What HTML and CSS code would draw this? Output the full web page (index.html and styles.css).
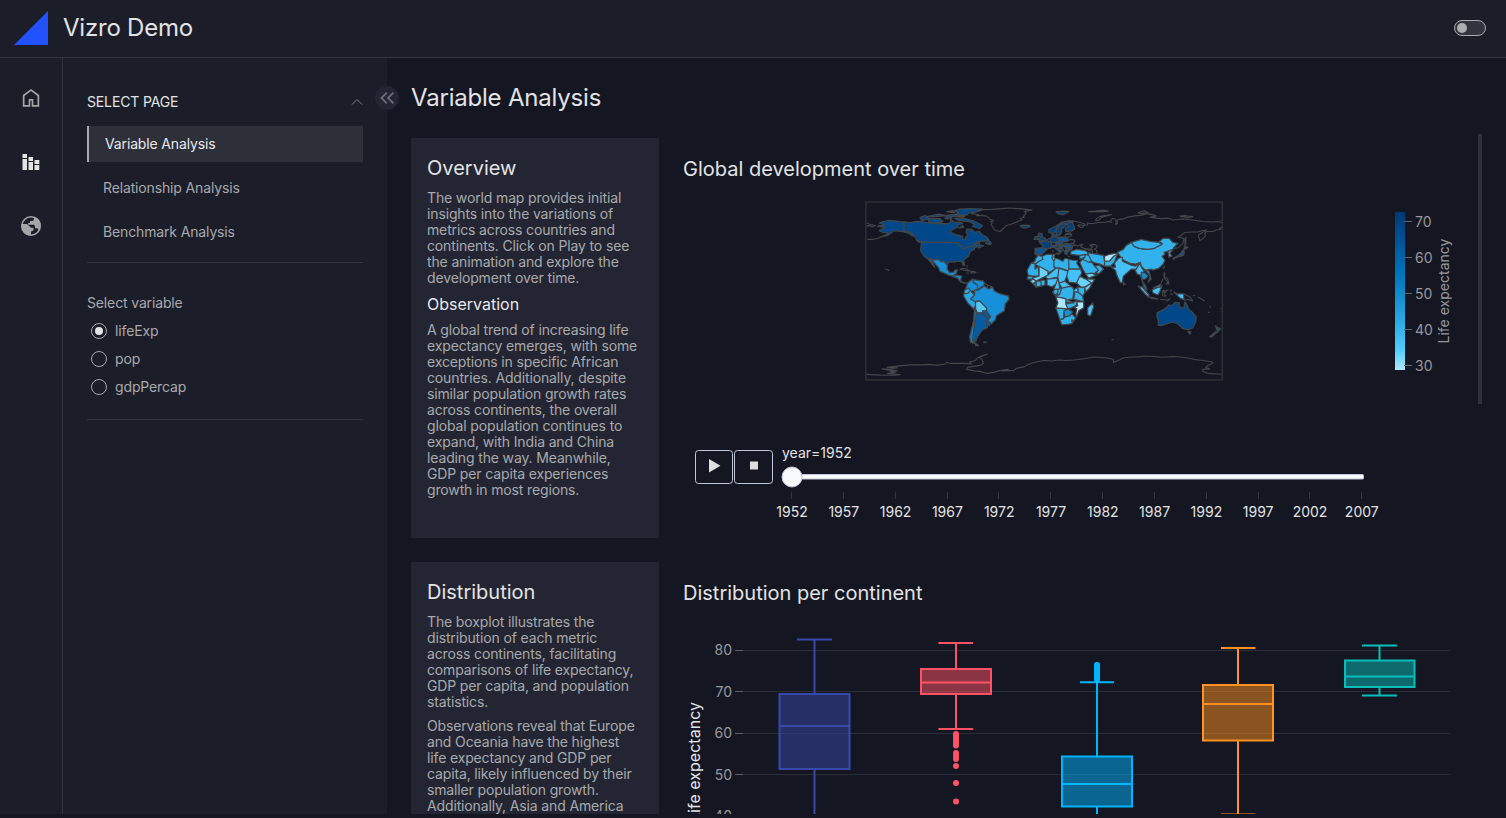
FILE: index.html
```html
<!DOCTYPE html>
<html lang="en">
<head>
<meta charset="utf-8">
<title>Vizro Demo</title>
<link rel="stylesheet" href="styles.css">
</head>
<body>
<div class="app">
  <header class="header">
    <svg class="logo" width="34" height="34" viewBox="0 0 34 34"><path d="M0 34 34 0V34Z" fill="#2251ff"/></svg>
    <h1 class="brand">Vizro Demo</h1>
    <span class="toggle"><span class="knob"></span></span>
  </header>
  <div class="body">
    <nav class="rail">
      <svg width="24" height="24" viewBox="0 0 24 24" fill="#a4a5a9"><path d="M5.500 19.100h4.200v-6h4.600v6h4.200V9.900L12 5.100 5.500 9.900Zm-1.700 1.700V9L12 3l8.200 6v11.800h-7.500v-6h-1.400v6Z"/></svg>
      <svg width="24" height="24" viewBox="0 0 24 24" fill="#e3e3e5"><path d="M3.500 9h4.500v11H3.500zM3.500 4h4.500v4H3.500zM9.500 12h4.500v8H9.500zM9.500 7h4.500v4H9.500zM15.500 15h4.800v5h-4.800zM15.500 10h4.800v4h-4.800z"/></svg>
      <svg width="24" height="24" viewBox="0 0 24 24" fill="#a4a5a9"><circle cx="12" cy="12" r="9.200" fill="none" stroke="#a4a5a9" stroke-width="1.600"/><path d="M2.500 10H8l4 3.800h2.500v2.700l-2.500 1V21.500C6.500 22 2 17.500 2.500 10ZM15 2.800V5a2 2 0 0 1-2 2h-2v2H9.200v1.800H15l1 1.200v2.200h2.200l1.800 2C24 10 20.500 4 15 2.800Z"/></svg>
    </nav>
    <aside class="panel">
      <div class="acc-title"><span>SELECT PAGE</span><svg width="12" height="8" viewBox="0 0 12 8"><path d="M1 6.500 6 1.500 11 6.500" fill="none" stroke="#7b7c83"/></svg></div>
      <div class="pages">
        <a class="page active">Variable Analysis</a>
        <a class="page">Relationship Analysis</a>
        <a class="page">Benchmark Analysis</a>
      </div>
      <div class="controls">
        <div class="label">Select variable</div>
        <div class="option"><span class="radio on"></span>lifeExp</div>
        <div class="option"><span class="radio"></span>pop</div>
        <div class="option"><span class="radio"></span>gdpPercap</div>
      </div>
      <span class="collapse"><svg width="24" height="24" viewBox="0 0 24 24"><path d="M11.800 6.600 6.400 12l5.400 5.400M18.400 6.600 13 12l5.400 5.400" fill="none" stroke="#6b6c75" stroke-width="1.800"/></svg></span>
    </aside>
    <main class="main">
      <h2 class="title">Variable Analysis</h2>
      <div class="grid">
        <section class="card">
          <h3>Overview</h3>
          <p>The world map provides initial<br>insights into the variations of<br>metrics across countries and<br>continents. Click on Play to see<br>the animation and explore the<br>development over time.</p>
          <h4>Observation</h4>
          <p>A global trend of increasing life<br>expectancy emerges, with some<br>exceptions in specific African<br>countries. Additionally, despite<br>similar population growth rates<br>across continents, the overall<br>global population continues to<br>expand, with India and China<br>leading the way. Meanwhile,<br>GDP per capita experiences<br>growth in most regions.</p>
        </section>
        <section class="figure">
          <h3>Global development over time</h3>
          <svg class="chart" width="775" height="340" viewBox="683 190 775 340">
            <defs>
              <linearGradient id="scale" x1="0" y1="0" x2="0" y2="1"><stop offset="0" stop-color="#003875"/><stop offset=".12" stop-color="#004a8c"/><stop offset=".4" stop-color="#0075bd"/><stop offset=".7" stop-color="#2caae6"/><stop offset=".88" stop-color="#52cfff"/><stop offset="1" stop-color="#afe7f9"/></linearGradient>
              <clipPath id="frame"><path d="M866 202h356v178H866z"/></clipPath>
            </defs>
            <g clip-path="url(#frame)"><g class="land" transform="translate(1044 291) scale(.992 -.992)">
              <g class="none">
                <path d="M-180 69-175 67-170 66-173 64.500-176 66-180 65M-164 54.500-168 53-173 52-178 52M-156 20.500-158 21.500-160 22.200"/>
                <path d="M-73 78-70 79.500-66 80.500-62 82-54 82.200-50 82.500-42 83-35 83.600-25 83-20 82.500-12 81.600-18 80.500-20 80-18 78.500-19 77-21 75.500-20 74-24 73-22 71.500-25 70.500-30 68.500-34 67-38 66-40 64-42 62-44 60-49 61-51 63-52 65-53.500 67-52 69-54 70-51 71-54 72-56 74-58 75.500-63 76.200-68 76-66 77.200-73 78Z"/>
                <path d="M28 71 32 70 37 69 41 67.500 40 66 35 66.800 34 66 37 64 40 64.500 39 66 44 66.500 43.500 68.500 46 68 50 68 54 69 60 69 65 70 68 69 67 71 69 73 72 72.500 73 70 72 67 74 68 74 71.500 77 72.500 80 72.500 83 74 87 75 93 76 98 76.500 104 78 111 76.500 113 75.500 107 74.500 113 73.500 119 73 125 73.500 130 71.500 140 72.500 150 71.500 160 70 170 69.500 175 70 180 69M180 65 177 63 179 62.500 174 61.500 170 60 165 60 163 59.500 162 57.500 163 56 160 52.500 157 51 155.500 56 158 58 164 61.500 160 61 155 59.500 149 59.500 142 59 138 56 135 54.500 141 53 140 48 135 43.500 131 43M143 54 143 47 142 46 142 52Z"/>
                <path d="M52 71 53 73 56 75 61 76 68 77 62 75.500 57 73.500 55 71ZM95 79 101 81 105 79 97 78ZM137 75.500 141 76 145 75.500 150 75 144 74ZM45 80 52 80.500 60 81.500 65 80.500 58 80ZM-16 80M178 71 180 71.500"/>
                <path d="M-180-84-165-84.800-150-85-145-84.500-158-83-150-82-155-81-148-80.500-158-79.500-163-78.500-155-79-148-77.500-158-77-146-75.500-135-74.500-125-74.500-115-74-108-75-100-73.500-98-72-94-73-88-72.800-80-73-73-73.500-75-71.500-69-70-67-67.500-62-65-57-63.500-61-65-65-67-62-70-61-73-64-75-72-76-77-77-78-79-70-80.500-65-81-58-83-50-82-44-80-36-79-42-80.500-30-80-28-78-20-76.500-16-74-10-72-5-71 0-70 8-70.500 15-69.500 22-70 30-69.500 35-69 42-68 50-66.500 57-67 64-67.500 70-69 70-72 75-70 80-67.500 88-66.500 95-66.500 102-65.500 110-66 120-66.800 130-66 138-66.500 145-67.500 152-69 160-70 170-71.500 170-73 165-75 163-77 167-78.500 160-79 160-81 165-83 180-84"/>
                <path d="M-84.500 22-82 23-79 22.500-76 21-74.500 20-78 20.500ZM-73 20-70 19.700-68.500 18.500-74 18.300ZM-78 18.200-76 18M-66 18.400-65.500 18.400M-78 26-77 24M121 18.500 122 17 121 14 124 13 125 11 126 7 123 7 125 9 121 13ZM118 8 120 12M121 24 122 25 120 22.500ZM80 9 82 7 80 6Z"/>
                <path d="M120 1 121 0 125 1 120-1 123-1 121-3 123-5 120-5 119-3ZM106-6 110-6.500 115-8 108-7.700ZM117-8.500 124-9M128 2 128-1M130-3 127-3M141-3 147-6 150-10 146-8.500 143-9 141-9M150-5 152-4M155-6 157-7 162-10M167-15 168-17M165-21 167-22M178-18 179-17M179-21 180-20M49 45 47 42 49 41 49 37 54 37 53 41 51 42 54 45 52 46.500 49 47 46 46Z"/>
                <path d="M28 46 32 46.500 34 45 36 46.500 39 47 37 44.500 42 42M40 43 47 42M44 41 48 40M68-49 70-49M-61-51.500-58-51.500-60-52.200Z"/>
              </g>
              <g fill="#00488a">
                <path d="M-141 60-141 69.500-146 70-152 70.800-156 71.200-162 70-166 68.500-161 66.500-168 65.500-164 64.500-161 64.500-161 63-165 62-166 60.500-162 59-157 58.600-160 56-164 54.800-158 56-154 58.500-152 60.500-148 60.500-144 60-137 58.500-131 55-130 56-135 59.500Z"/>
                <path d="M-141 69.600-135 69-128 70.200-122 69.800-115 68.500-108 68-102 67.800-95 68-94 72-90 69-85 69.500-82 68-87 67-87 64.500-94 61-94 59-88 56.500-82 55-82 52.500-79 51.500-79 54.500-76.500 56.500-78.500 59-78 62.300-73 62.200-70 59-65 60-64 58-61.500 56.500-57 54-56 52-60 50.200-66 50.200-71 47-65 49-65 46.500-61 45.500-66 43.500-67 45-69 47.500-71 45-75 45-79 43.300-83 42-83 46-88 48.300-95 49-123 49-128 51-130 55-131 56-135 59.500-141 60Z"/>
                <path d="M-117 73-105 73-102 70-107 68.500-116 69.500ZM-125 74-120 76-116 73-123 71ZM-90 73-82 73.500-72 71-68 69-62 66-65 63-72 65-70 67-75 70-85 71ZM-86 63.500-82 66-81 64ZM-90 77-86 79-90 81-85 82.500-75 83-62 82.500-68 80-76 78.500-78 76.500ZM-96 77-100 73-93 73ZM-118 75-110 75-98 76-106 77.500-113 76ZM-94 75-80 75-86 76.500-94 77ZM-98 80-92 81-90 79ZM-59 48-56 51.500-53 48-54 46.800ZM-128 51-123 48.500-126 49.500Z"/>
                <path d="M-123 49-95 49-88 48.200-84 46-82.500 43-79 43.300-75 45-71 45-69 47.300-67 45-70 43.500-70.500 41.700-74 40.500-75.500 37-76 35-81 31.500-80.200 26-81.500 26-83 29.800-89 30.200-90 29-94 29.500-97.300 27.800-97.300 26-101 29.700-104 29.600-106.500 31.800-111 31.300-114.800 32.500-117 32.500-120.500 34.500-122.500 37.500-124.300 40.500-124 46Z"/>
                <path d="M114-22 114-26 115.500-31 115-34.500 118-35 124-33 129-31.500 134-32.500 137-35 140-38 146-39 150-37 153-31 153.500-26 149-21 146-18.500 143-12 142-11 141-17 139.500-17.500 136-15 136.500-12 132-11.500 129-15 126-14 122-18ZM145-41 148-41 147-43.500Z"/>
              </g>
              <g fill="#234d73"><path d="M173-35 175-37 178-38 175-41.500ZM173-41 174-42 169-46.500 167-46ZM141 41 141.500 45 145 44 142 42ZM140 41 141.500 39 140.500 36 136 34.500 131 33 131 31.500 130 33 136 36Z"/></g>
              <g fill="#073f7a">
                <path d="M-24 65.500-22 66.400-15 66.200-14 65-19 63.400-22 64ZM5 59 5 62 13 66 18 69.500 26 71 30 70 24 68.500 18 68 13 64 12 60 8 58ZM12 60 13 64 18 68 22 67.500 22 65.500 17 62 18 60 16 56.500 13 55.500ZM22 60 21.500 63 25 65 22 68 28 70 30 66 31 62.500 28 60.500ZM8 55 8 57.500 11 57 12 55ZM14 78 12 80 20 80.500 25 80 19 77Z"/>
                <path d="M-5 50 1 51 1.500 53-2 55-2 57.500-5 58.500-6 56-3 54-5 52.500ZM-10 52-9 54.500-6 55-6 52ZM-4.500 48.500 2 51 8 49 7 46 7.500 43.500 3 42.500-1.500 43.500-1 46ZM7 49 6 53 9 55 14 54 15 51 12.500 48.500Z"/>
              </g>
              <g fill="#0b5594"><path d="M-9 43-2 43.500 3 42 0 39-2 37-5 36-9 37ZM-7 43-7 37M14 54 19 54.500 24 54 24 50 19 49.500 15 51ZM8 46 13 46.500 12 44 18 40 16 38 15 40 10 44 7 44ZM12 50 19 49 17 46 12 47ZM16 46 23 48 20 46 17 45.500ZM21 41 26 41 23 38 23 36.500 21 38ZM20 46 25 48 29 45.500 28 42 22 42.500ZM14 45 19 45 19 42 15 43.500ZM2 51 6 53.500M12 38 15 38 15 37ZM9 41 9 39M19 42 20 40M22 45 22 41M23 44 28 44M24 35 26 35"/></g>
              <g fill="none"><path d="M21 55 22 57.500 26 59 28 56 24 54M22 57 27 57M24 51 28 52 31 51 30 48 27 48"/></g>
              <g fill="#1790d9">
                <path d="M-117 32.500-111 31.300-106.500 31.800-104 29.600-101 29.700-97.300 26-97.700 22-95 18.500-91 19-90 21-87 21.300-88.500 18-92 15-96 16-105 20-106 23-112 30-114 31.500-110 24-112 26ZM-88 16-83 15-84 11-83 9-80 8.500-84 9-87 13-92 14.500Z"/>
                <path d="M-77 8-72 12-71 9-67 6-67 2-70 0-75 0-79 2ZM-72 12-68 11-61 10-60 8-61 5-64 4-66 1-67 3-67 6-71 8Z"/>
                <path d="M-60 5-56 2-52 4-50 0-44-3-36-5-35-8-39-13-40-20-48-25-49-29-53-33-57-30-54-26-58-22-58-17-61-14-65-10-70-11-74-8-70-4-70 1-66 1Z"/>
              </g>
              <path d="M-60 8-57 6-52 4M-57 6-57 2M-54 5-54 2M-77 8-82 8" fill="none"/>
              <path d="M-76 3-80 1-81-5-77-12-71-18-69-15-69-11-74-8-70-4-73-1ZM-80-3-76-2-75 0" fill="#29a7e5"/>
              <path d="M-69-11-65-10-61-14-58-17-58-20-63-22-67-22.500-69-18Z" fill="#56c6f4"/>
              <path d="M-62-20-58-20-54-26-58-27ZM-68-22-63-22-58-26-54-26-58-30-57-34-57-37-62-39-65-43-67-46-69-51-72-50-71-42-70-34-69-28ZM-58-30-54-32-55-35-58-34ZM-69-53-66-55-69-55Z" fill="#035ca2"/>
              <path d="M-70-18-68-22-70-31-71-42-72-50-69-53-74-52-75-46-73-38-71-30Z" fill="#147cc3"/>

              <g fill="#31b2ed">
                <path d="M-13 28-9 30-9 32-6 36-2 35-1 32-5 30-9 27.500ZM-2 35 3 37 8.500 37 8 33 10 30 10 24 12 23 6 19 3 19-9 27-5 30-1 32ZM8.500 37 11 37 10 34 11.500 33 10 30 8 33ZM11.500 33 15 32 19 30 21 33 25 32 25 20 16 23 12 23 10 25 10 30ZM25 32 29 31 34 31 33 28 37 22 25 22Z"/>
                <path d="M-17 21-13 28-9 27.500-9 22-6 25-5 15-12 15-16 16Z"/>
                <path d="M27 37 27 40 33 42 41 41 44 39 44 37 36 36 31 36.500ZM36 36 42 37 41 34 36 32ZM42 37 45 36 48 30 45 29 39 32 41 34ZM44 39 48 38 54 37 60 36 61 30 61 25 57 27 52 28 48 30 45 36ZM36 29 39 32 45 29 48 29 51 25 55 21 52 18 44 17 42 17 39 22ZM61 25 61 30 66 31 70 36 74 37 71 29 67 25ZM51 25 56 26 60 22 55 17 52 19 55 21Z"/>
                <path d="M74 39 80 42 83 46 88 49 91 45 96 43 105 42 111 43 115 46 119 48 116 50 120 53 126 53 130 49 135 48 131 44 130 42 125 40 121 39 122 37 119 35 122 31 120 27 116 23 110 21 108 22 102 21 98 25 97 29 92 27 86 28 79 32Z"/>
                <path d="M88 49 98 52 107 50 116 49 119 47 111 43 105 42 96 43 91 45ZM125 40 130 42 127 38 129 35 126 34Z"/>
                <path d="M12-17 24-18 20-22 20-28 16-29ZM16-29 20-27 28-23 32-27 28-33 22-34 18-34Z"/>
                <path d="M29-8 33-9 40-11 39-5 34-1 30-1ZM34 4 41 4 41-2 39-5 34-1ZM11 2 14 2 14-2 11-4 9-1ZM14 2 18 4 16-3 12-5 14-2ZM22-13 28-12 33-10 33-14 28-17 23-18ZM-16 15-12 15-11 12-17 12ZM-8 4-3 5-3 10-8 10ZM-3 5 1 6 1 11-3 11ZM24-9 30-8 31-3 29 4 24 5 18 4 16-3 12-6 18-7 22-8 22-11 27-12 30-12Z"/>
              </g>
              <g fill="#45c1fa">
                <path d="M0 15 4 16 12 23 15 23 14 14 4 12ZM15 23 24 20 23 15 21 10 15 8 14 14ZM24 20 25 22 37 22 38 18 35 12 33 8 25 9 23 15ZM3 6 3 12 14 13 12 7 8 4ZM12 7 14 13 15 8 16 2 10 2ZM15 8 21 10 27 5 18 3ZM30 1 34 4 34-1 30-1ZM49-12 50-16 47-25 44-24 44-17Z"/>
                <path d="M68 24 72 24 71 28 75 33 79 34 79 30 88 26 92 25 96 28 93 22 88 22 80 15 79 9 77 8 73 17 72 21ZM92 21 97 28 98 24 101 20 98 17 99 11 97 16 94 17ZM95 5 99 4 106-4 105-6 101-2ZM109 1 115 4 119 5 117 0 115-4 110-2ZM131-1 134-3 141-3 141-9 137-7 134-4Z"/>
              </g>
              <g fill="#168ed3"><path d="M98 19 102 18 105 15 102 12 99 12 100 6 102 2 104 1 102 6 99 10ZM102 21 106 20 108 12 105 9 107 15ZM20-20 24-18 29-21 26-25 21-26ZM28-29 30-30 28-31ZM9-1 11-4 9-2ZM110 3 114 5 118 7 117 4Z"/></g>
              <g fill="#69d2fa"><path d="M-5 25-3 24 4 20 4 16-2 13-8 10-12 13-5 15ZM42 17 48 18 53 16 45 13ZM36 15 42 12 48 8 42 4 37 4 33 8ZM42 12 51 12 46 3 42-1 41 4 48 8ZM-14 10-11 12-8 10-11 7ZM-11 7-8 8-8 4ZM125-9 127-8 124-10Z"/></g>
              <g fill="#ace8fb"><path d="M12-6 18-7 22-8 22-13 24-18 12-17 14-12ZM33-11 40-11 40-17 35-20 33-26 32-23 33-18 30-16 34-15ZM61 30 61 35 66 37 72 38 75 37 70 35 66 30Z"/></g>
            </g></g>
            <rect x="865.800" y="202" width="356.500" height="178" fill="none" stroke="#2b2d33" stroke-width="1.700"/>
            <rect x="1395" y="212" width="10" height="158" fill="url(#scale)"/>
            <path d="M1404 221.500h8M1404 257.500h8M1404 293.500h8M1404 329.500h8M1404 365.500h8" stroke="#63656e"/>
            <g class="tick"><text x="1415" y="227">70</text><text x="1415" y="263">60</text><text x="1415" y="299">50</text><text x="1415" y="335">40</text><text x="1415" y="371">30</text><text transform="translate(1449 343.500) rotate(-90)" textLength="105">Life expectancy</text></g>
            <g fill="none" stroke="#bec8d9"><rect x="695.500" y="450.500" width="37" height="33" rx="3"/><rect x="734.500" y="450.500" width="38" height="33" rx="3"/></g>
            <path d="M709 459v13.500l11.500-6.700zM750 461.500h8v8h-8z" fill="#dededf"/>
            <rect x="790.500" y="474.500" width="573" height="4.500" rx="1" fill="#f8fafc" stroke="#bec8d9"/>
            <circle cx="792" cy="477" r="10" fill="#f8fafc" stroke="#bec8d9"/>
            <path d="M791.500 492v7M843.500 492v7M895.500 492v7M947.500 492v7M998.500 492v7M1050.500 492v7M1102.500 492v7M1154.500 492v7M1206.500 492v7M1258.500 492v7M1309.500 492v7M1361.500 492v7" stroke="#33353d"/>
            <g class="years"><text x="782" y="458" class="start">year=1952</text><text x="792" y="517">1952</text><text x="843.800" y="517">1957</text><text x="895.600" y="517">1962</text><text x="947.400" y="517">1967</text><text x="999.200" y="517">1972</text><text x="1051" y="517">1977</text><text x="1102.800" y="517">1982</text><text x="1154.600" y="517">1987</text><text x="1206.400" y="517">1992</text><text x="1258.200" y="517">1997</text><text x="1310" y="517">2002</text><text x="1361.800" y="517">2007</text></g>
          </svg>
        </section>
        <section class="card">
          <h3>Distribution</h3>
          <p>The boxplot illustrates the<br>distribution of each metric<br>across continents, facilitating<br>comparisons of life expectancy,<br>GDP per capita, and population<br>statistics.</p>
          <p class="next">Observations reveal that Europe<br>and Oceania have the highest<br>life expectancy and GDP per<br>capita, likely influenced by their<br>smaller population growth.<br>Additionally, Asia and America</p>
        </section>
        <section class="figure">
          <h3>Distribution per continent</h3>
          <svg class="chart" width="775" height="200" viewBox="683 614 775 200">
            <path d="M743 650.500h707M743 691.500h707M743 733.500h707M743 774.500h707" stroke="#2b2d37"/>
            <path d="M735 650.500h8M735 691.500h8M735 733.500h8M735 774.500h8" stroke="#5c5e68"/>
            <g class="tick end"><text x="732" y="655">80</text><text x="732" y="697">70</text><text x="732" y="738">60</text><text x="732" y="780">50</text><text x="732" y="821">40</text></g>
            <text class="ytitle" transform="translate(699.500 822) rotate(-90)" textLength="120">Life expectancy</text>
            <g stroke-width="2">
              <g stroke="#3949ab" fill="#3949ab80"><path d="M779.500 694h70v75h-70zM779.500 726h70M814.500 694v-54.500M797 639.500h35M814.500 769v60"/></g>
              <g stroke="#ff5267" fill="#ff526780"><path d="M921 669h70v25h-70zM921 682.500h70M956 669v-26M938.500 643h34.500M956 694v35M938.500 729h34.500"/></g>
              <g fill="#ff5267"><circle cx="956" cy="734" r="3"/><circle cx="956" cy="736" r="3"/><circle cx="956" cy="738.500" r="3"/><circle cx="956" cy="741" r="3"/><circle cx="956" cy="743" r="3"/><circle cx="956" cy="745.500" r="3"/><circle cx="956" cy="753" r="3"/><circle cx="956" cy="756" r="3"/><circle cx="956" cy="759" r="3"/><circle cx="956" cy="766" r="3"/><circle cx="956" cy="783" r="3"/><circle cx="956" cy="801.500" r="3"/></g>
              <g stroke="#00b4ff" fill="#00b4ff80"><path d="M1062 756.500h70v50h-70zM1062 784h70M1097 756.500v-74M1080 682.300h34M1097 806.500v20"/></g>
              <rect x="1094" y="662" width="6" height="20.500" rx="2.500" fill="#00b4ff"/>
              <g stroke="#ff9222" fill="#ff922280"><path d="M1203 685h70v55.500h-70zM1203 704h70M1238 685v-37M1221 648h34.500M1238 740.500v74M1221 814.500h34.500"/></g>
              <g stroke="#08bdba" fill="#08bdba80"><path d="M1345 660.500h69.500v26.500h-69.500zM1345 676.500h69.500M1379.500 660.500v-15M1362 645.500h35M1379.500 687v8.500M1362 695.500h35"/></g>
            </g>
          </svg>
        </section>
      </div>
      <span class="scrollbar"></span>
    </main>
  </div>
</div>
</body>
</html>
```
FILE: styles.css
```css
* { box-sizing: border-box; }
body { margin: 0; background: #141721; color: #e2e3e5; font: 400 14px/16px Inter, "Liberation Sans", sans-serif; letter-spacing: -.14px; overflow: hidden; }
h1, h2, h3, h4, p { margin: 0; font-weight: 400; }
svg { display: block; letter-spacing: 0; }
.app { height: 814px; display: flex; flex-direction: column; overflow: hidden; }
.header { flex: 0 0 58px; display: flex; align-items: center; padding: 0 20px 2px 14px; background: #1b1e29; border-bottom: 1px solid #323440; }
.brand { font-size: 24px; line-height: 32px; margin-left: 15px; flex: 1; letter-spacing: -.22px; }
.toggle { width: 32px; height: 16px; border: 1px solid #a9aaae; border-radius: 8px; background: #323440; display: flex; align-items: center; padding: 0 2px; }
.knob { width: 10px; height: 10px; border-radius: 50%; background: #adaeb2; }
.body { flex: 1; display: flex; min-height: 0; }
.rail { flex: 0 0 63px; background: #1b1e29; border-right: 1px solid #323440; display: flex; flex-direction: column; gap: 40px; align-items: center; padding: 28px 1px 0 0; }
.panel { flex: 0 0 324px; background: #1b1e29; padding: 24px; position: relative; }
.acc-title { height: 40px; display: flex; align-items: center; justify-content: space-between; }
.pages { display: flex; flex-direction: column; gap: 8px; margin-top: 4px; padding-bottom: 12px; border-bottom: 1px solid #323440; }
.page { height: 36px; padding-left: 16px; display: flex; align-items: center; color: #a8a9ad; }
.active { background: #2d2f39; border-left: 2px solid #a9aaae; color: #e8e9eb; }
.controls { padding-top: 32px; height: 157px; border-bottom: 1px solid #323440; color: #a8a9ad; }
.label { margin-bottom: 12px; }
.option { display: flex; align-items: center; gap: 8px; height: 16px; margin-bottom: 12px; padding-left: 4px; }
.radio { width: 16px; height: 16px; border: 1px solid #a4a5a9; border-radius: 50%; display: grid; place-items: center; }
.on::after { content: ""; width: 8px; height: 8px; border-radius: 50%; background: #e2e3e5; }
.collapse { position: absolute; right: -12px; top: 28px; width: 24px; height: 24px; border-radius: 50%; background: #232632; }
.main { flex: 1; padding: 24px 24px 0; position: relative; min-width: 0; }
.title { font-size: 24px; line-height: 32px; height: 56px; letter-spacing: -.2px; }
.grid { display: grid; grid-template-columns: 248px 775px; grid-auto-rows: 400px; gap: 24px; }
.card { background: #232632; padding: 18px 16px; color: #a8a9ad; }
h3 { font-size: 20px; line-height: 24px; color: #e2e3e5; letter-spacing: 0; }
.card p { margin-top: 10px; white-space: nowrap; }
.card h4 { font-size: 16px; line-height: 20px; margin-top: 8px; color: #e8e9eb; letter-spacing: 0; }
.card h4 + p { margin-top: 8px; }
.card p.next { margin-top: 8px; }
.figure { padding-top: 19px; }
.chart { margin-top: 9px; }
.land { stroke: #43474a; stroke-width: 1.25; stroke-linejoin: round; }
.none { fill: none; stroke-width: 1.1; }
.tick { fill: #97989d; font-size: 14px; }
.end { text-anchor: end; }
.years { fill: #e2e2e3; font-size: 14px; text-anchor: middle; }
.years .start { text-anchor: start; }
.ytitle { fill: #e2e3e5; font-size: 16px; }
.scrollbar { position: absolute; left: 1091px; top: 76px; width: 4px; height: 270px; background: #2d2f39; }
```
